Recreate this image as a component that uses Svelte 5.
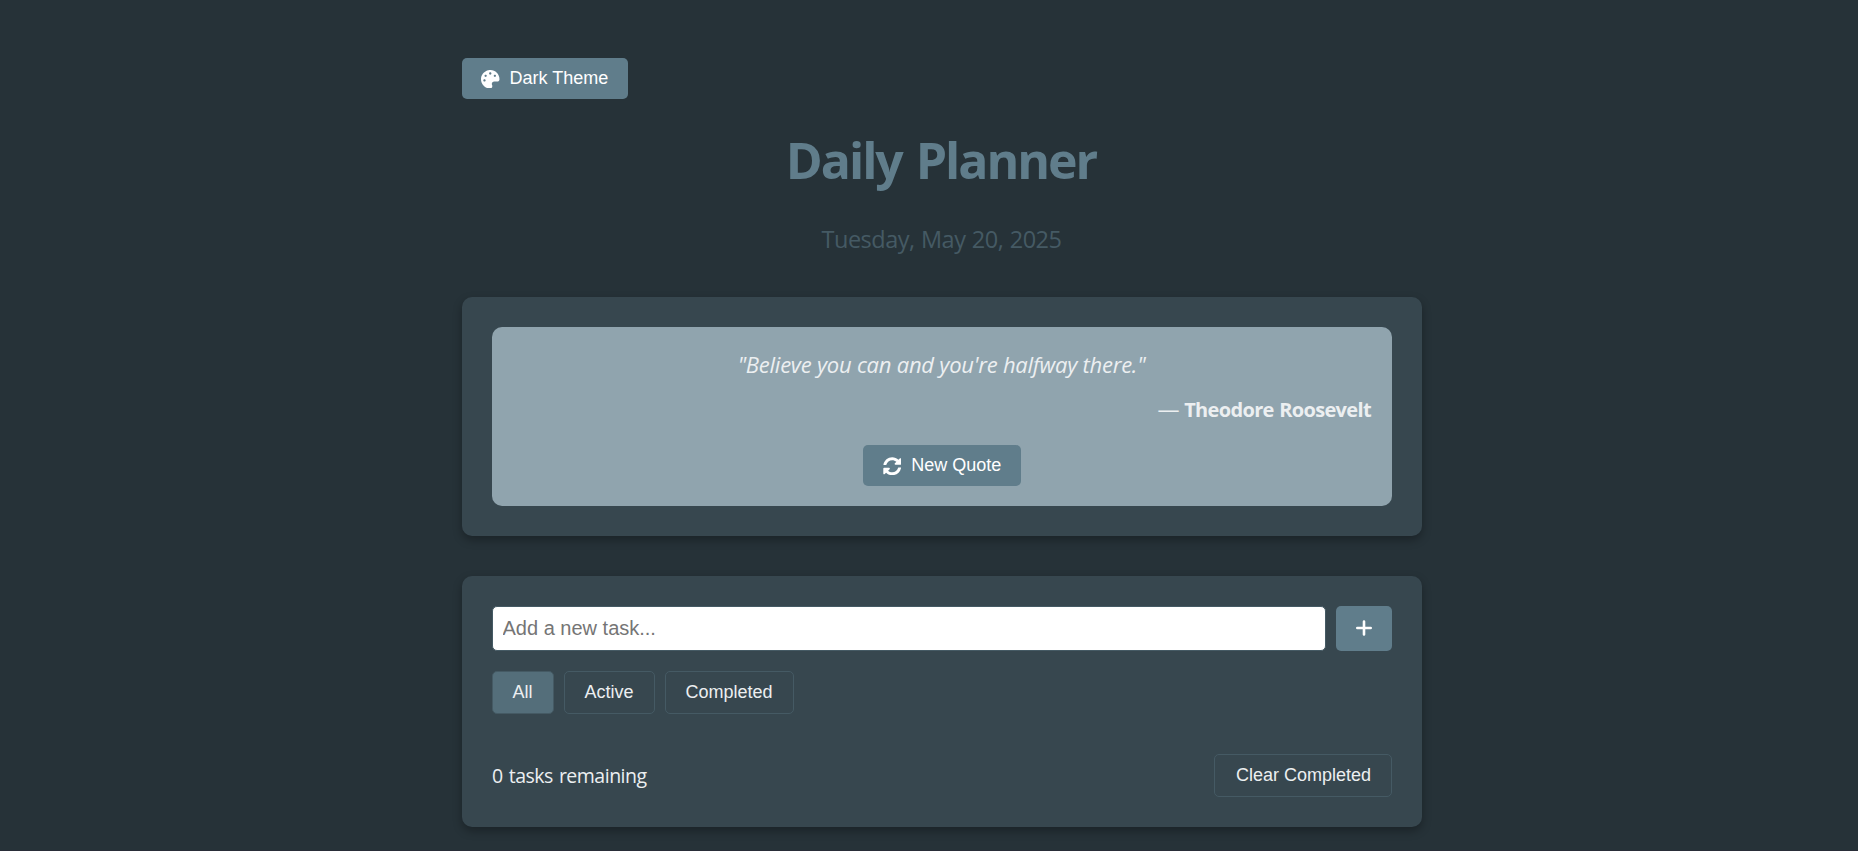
<script>
  let theme = $state('Dark Theme');
  let filter = $state('All');
  let draft = $state('');
  const filters = ['All', 'Active', 'Completed'];
</script>

<div class="page">
  <main>
    <button class="btn"
      ><svg class="icon" viewBox="0 0 512 512"><path d="M204.300 5C104.900 24.400 24.800 104.300 5.200 203.400c-37 187 131.700 326.400 258.800 306.700 41.200-6.400 61.400-54.600 42.500-91.700-23.100-45.400 9.900-98.400 60.900-98.400h79.700c35.800 0 64.800-29.600 64.900-65.300C511.500 97.100 368.100-26.900 204.300 5zM96 320c-17.700 0-32-14.300-32-32s14.300-32 32-32 32 14.300 32 32-14.300 32-32 32zm32-128c-17.700 0-32-14.300-32-32s14.300-32 32-32 32 14.300 32 32-14.300 32-32 32zm128-64c-17.700 0-32-14.300-32-32s14.300-32 32-32 32 14.300 32 32-14.300 32-32 32zm128 64c-17.700 0-32-14.300-32-32s14.300-32 32-32 32 14.300 32 32-14.300 32-32 32z" /></svg>
      <span class="label">{theme}</span></button>

    <h1>Daily Planner</h1>
    <p class="date">Tuesday, May 20, 2025</p>

    <section class="card">
      <div class="quote">
        <p class="saying">"Believe you can and you're halfway there."</p>
        <p class="author"><span class="dash">—</span> Theodore Roosevelt</p>
        <button class="btn refresh"
          ><svg class="icon" viewBox="0 0 512 512"><path d="M370.720 133.280C339.458 104.008 298.888 87.962 255.848 88c-77.458.068-144.328 53.178-162.791 126.850-1.344 5.363-6.122 9.150-11.651 9.150H24.103c-7.498 0-13.194-6.807-11.807-14.176C33.933 94.924 134.813 8 256 8c66.448 0 126.791 26.136 171.315 68.685L463.030 40.970C478.149 25.851 504 36.559 504 57.941V192c0 13.255-10.745 24-24 24H345.941c-21.382 0-32.090-25.851-16.971-40.971l41.750-41.749zM32 296h134.059c21.382 0 32.090 25.851 16.971 40.971l-41.750 41.750c31.262 29.273 71.835 45.319 114.876 45.280 77.418-.070 144.315-53.144 162.787-126.849 1.344-5.363 6.122-9.150 11.651-9.150h57.304c7.498 0 13.194 6.807 11.807 14.176C478.067 417.076 377.187 504 256 504c-66.448 0-126.791-26.136-171.315-68.685L48.970 471.030C33.851 486.149 8 475.441 8 454.059V320c0-13.255 10.745-24 24-24z" /></svg>
          <span class="label">New Quote</span></button>
      </div>
    </section>

    <section class="card tasks">
      <div class="entry">
        <input type="text" placeholder="Add a new task..." bind:value={draft} />
        <button class="btn add" aria-label="Add"
          ><svg viewBox="0 0 16 16"><path d="M8 1.500V14.500M1.300 8H14.700" /></svg></button>
      </div>
      <div class="filters">
        {#each filters as name}
          <button class="outline" class:active={filter === name} onclick={() => (filter = name)}>{name}</button>
        {/each}
      </div>
      <div class="footer">
        <span class="count">0 tasks remaining</span>
        <button class="outline clear">Clear Completed</button>
      </div>
    </section>
  </main>
</div>

<style>
  :global(body) {
    background: #263238;
    overflow: hidden;
  }
  .page {
    box-sizing: border-box;
    height: 851px;
    padding: 58px 0 0 462px;
    color: #eceff1;
    font-family: 'Open Sans', 'Noto Sans', sans-serif;
    border-bottom: 1px solid #292d38;
    overflow: hidden;
  }
  main {
    width: 960px;
    display: flex;
    flex-direction: column;
    align-items: stretch;
  }
  button,
  input {
    margin: 0;
    font-family: 'Liberation Sans', Arial, sans-serif;
  }
  .btn {
    box-sizing: border-box;
    display: flex;
    align-items: center;
    align-self: flex-start;
    gap: 10px;
    height: 41px;
    padding: 0 19.500px 0 19px;
    border: 0;
    border-radius: 5px;
    background: #607d8b;
    color: #fff;
    font-size: 18px;
    line-height: 21px;
    white-space: nowrap;
  }
  .icon {
    width: 18.500px;
    height: 18.500px;
    margin-top: 1px;
    fill: currentColor;
  }
  h1 {
    margin: 24px 0 0;
    height: 75px;
    line-height: 75px;
    font-size: 50px;
    font-weight: 700;
    letter-spacing: -2.050px;
    word-spacing: 3px;
    padding-right: 2px;
    text-align: center;
    color: #607d8b;
  }
  .date {
    margin: 23px 0 0;
    height: 36px;
    line-height: 36px;
    font-size: 23.500px;
    letter-spacing: -0.500px;
    word-spacing: 0.800px;
    padding-right: 1px;
    text-align: center;
    color: #455a64;
  }
  .card {
    box-sizing: border-box;
    height: 239px;
    margin-top: 40px;
    padding: 30px;
    border-radius: 10px;
    background: #37474f;
    box-shadow: 0 4px 10px rgba(0, 0, 0, 0.3);
  }
  .quote {
    box-sizing: border-box;
    height: 179px;
    padding: 19px 20px 20px;
    border-radius: 10px;
    background: #90a4ae;
    display: flex;
    flex-direction: column;
  }
  .saying {
    margin: 0;
    line-height: 36px;
    font-size: 22px;
    font-style: italic;
    letter-spacing: -0.240px;
    padding-right: 1px;
    text-align: center;
  }
  .author {
    margin: 12px 0 0;
    height: 32px;
    line-height: 32px;
    font-size: 20px;
    font-weight: 700;
    letter-spacing: -0.650px;
    word-spacing: 0.800px;
    padding-right: 1px;
    text-align: right;
  }
  .dash {
    font-size: 22px;
    line-height: 1;
    font-weight: 400;
    letter-spacing: -0.700px;
  }
  .refresh {
    align-self: center;
    gap: 10px;
    margin-top: 19px;
    padding: 0 20px;
  }
  .tasks {
    height: 251px;
    margin-top: 40px;
  }
  .entry {
    display: flex;
    gap: 10px;
    height: 45px;
  }
  input {
    box-sizing: border-box;
    flex: 1;
    padding: 0 9.500px;
    border: 1px solid #455a64;
    border-radius: 5px;
    background: #fff;
    font-size: 20px;
    outline: 0;
  }
  input::placeholder {
    color: #757575;
  }
  .add {
    width: 56px;
    height: 45px;
    justify-content: center;
    padding: 0;
  }
  .add svg {
    width: 16px;
    height: 16px;
    margin-top: -1px;
    fill: none;
    stroke: currentColor;
    stroke-width: 2.600;
    stroke-linecap: round;
  }
  .filters {
    display: flex;
    gap: 10px;
    margin-top: 20px;
  }
  .outline {
    box-sizing: border-box;
    height: 43px;
    padding: 0 19px 0 20px;
    border: 1px solid #455a64;
    border-radius: 5px;
    background: transparent;
    color: #eceff1;
    font-size: 18px;
    line-height: 21px;
    white-space: nowrap;
  }
  .filters .outline {
    padding: 0 20.500px 0 19.500px;
  }
  .filters .active {
    background: #546e7a;
  }
  .clear {
    width: 178px;
  }
  .footer {
    display: flex;
    align-items: center;
    justify-content: space-between;
    margin-top: 40px;
  }
  .count {
    font-size: 19.500px;
    line-height: 32px;
    letter-spacing: -0.500px;
    word-spacing: 1.500px;
    padding-top: 1px;
  }
</style>
